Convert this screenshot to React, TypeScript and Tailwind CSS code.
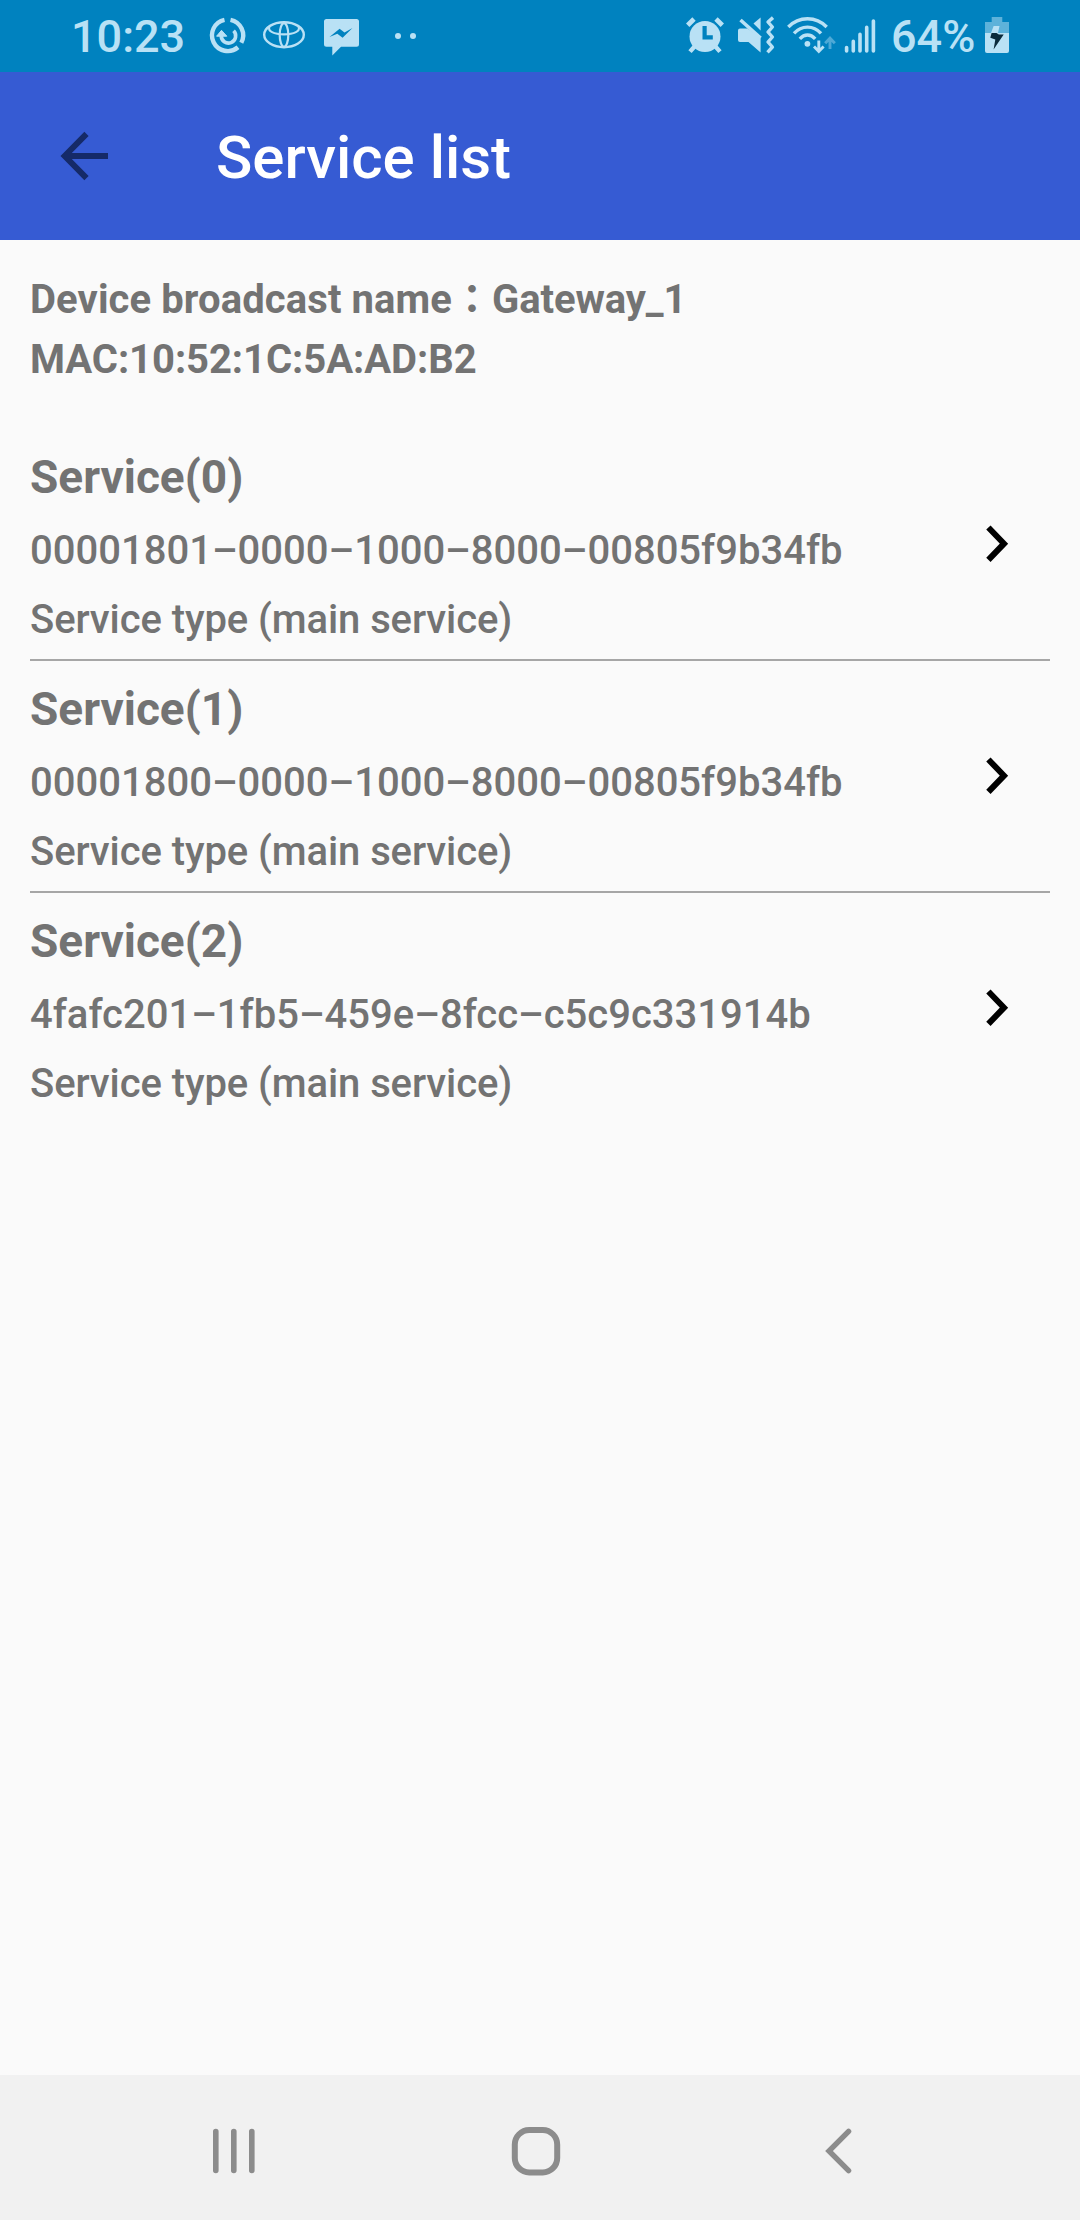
const services = [
  { name: "Service(0)", uuid: "00001801–0000–1000–8000–00805f9b34fb" },
  { name: "Service(1)", uuid: "00001800–0000–1000–8000–00805f9b34fb" },
  { name: "Service(2)", uuid: "4fafc201–1fb5–459e–8fcc–c5c9c331914b" },
];

function SyncIcon() {
  return (
    <svg className="ml-[20px] h-[72px] w-[44px]" viewBox="206 0 44 72" fill="none" stroke="currentColor">
      <path d="M230.5 19.8 A15.8 15.8 0 0 1 241.3 42.7" strokeWidth="4.4" />
      <path d="M238 47.3 A15.8 15.8 0 1 1 224.5 19.8" strokeWidth="4.4" />
      <path d="M233.6 30.8 A7.2 7.2 0 1 1 221.3 35.5" strokeWidth="3.6" />
      <path d="M216.6 36.2 L221.5 30.3 L226.8 36.2 Z" fill="currentColor" strokeWidth="1" />
    </svg>
  );
}

function ToyotaIcon() {
  return (
    <svg className="ml-[10px] h-[72px] w-[48px]" viewBox="260 0 48 72" fill="none" stroke="currentColor" strokeWidth="2.4">
      <ellipse cx="284" cy="34.7" rx="19.8" ry="12.5" />
      <ellipse cx="284" cy="35" rx="4.3" ry="11.8" strokeWidth="2.2" />
      <path d="M269.5 26.8 C267 31 274 34.3 284 34.3 S301 31 298.5 26.8" strokeWidth="2.2" />
    </svg>
  );
}

function MessengerIcon() {
  return (
    <svg className="ml-[9px] h-[72px] w-[48px]" viewBox="317 0 48 72">
      <path
        d="M326.5 19 H356.5 Q359 19 359 21.5 V44.2 Q359 46.7 356.5 46.7 H341 L332.3 55.5 V46.7 H326.5 Q324 46.7 324 44.2 V21.5 Q324 19 326.5 19 Z"
        fill="currentColor"
      />
      <path d="M329.5 37 L339.6 28.8 L344.5 32.6 L352.5 28 L342.6 37.8 L337.3 33.8 Z" fill="#0082bf" />
    </svg>
  );
}

function AlarmIcon() {
  return (
    <svg className="h-[72px] w-[44px]" viewBox="683 0 44 72" stroke="currentColor">
      <circle cx="705" cy="36.5" r="15.5" fill="currentColor" stroke="none" />
      <path d="M687.7 25.2 L694 19 M722.3 25.2 L716 19" strokeWidth="4.8" />
      <path d="M695 46 L690 51.6 M715 46 L720 51.6" strokeWidth="4.4" />
      <path d="M704.6 26 V37.3 H712.8" fill="none" stroke="#0082bf" strokeWidth="4.2" />
    </svg>
  );
}

function MuteVibrateIcon() {
  return (
    <svg className="ml-[6px] h-[72px] w-[44px]" viewBox="733 0 44 72" fill="currentColor">
      <path d="M738 30.6 Q738 28.6 740 28.6 H747.5 L760.6 38 V52.6 L748.5 42 H740 Q738 42 738 40 Z" />
      <path d="M740.5 20 L760.6 38" fill="none" stroke="currentColor" strokeWidth="3.6" />
      <path d="M753.5 23.6 L760.6 17.5 V30.5 Z" />
      <path
        d="M773 17.6 L768 22 L772.4 27 L768 32 L772.4 37 L768 42 L772.4 47 L767.5 52.4"
        fill="none"
        stroke="currentColor"
        strokeWidth="3.4"
        strokeLinejoin="round"
      />
    </svg>
  );
}

function WifiIcon() {
  return (
    <svg className="ml-[8px] h-[72px] w-[52px]" viewBox="785 0 52 72" fill="none" stroke="currentColor" strokeWidth="3.4">
      <path d="M788.3 27 C799 16 816 16 826.7 27" />
      <path d="M794 33.4 C801.5 25 813.5 25 821 33.4" />
      <path d="M799.8 38.8 C804.5 33.8 810.5 33.8 815.2 38.8" />
      <circle cx="807.4" cy="43.8" r="2.9" fill="currentColor" stroke="none" />
      <path d="M818.8 40.6 V51 M814 46.4 L818.8 51.4 L823.6 46.4" strokeWidth="2.9" />
      <path d="M830 49 V38.6 M825.2 43.2 L830 38.2 L834.8 43.2" strokeWidth="2.9" opacity="0.42" />
    </svg>
  );
}

function SignalIcon() {
  return (
    <svg
      className="ml-[6px] h-[72px] w-[34px]"
      viewBox="843 0 34 72"
      stroke="currentColor"
      strokeWidth="3.6"
      strokeLinecap="round"
    >
      <path d="M846.6 47.6 V51 M853.3 41.4 V51 M860 34.4 V51 M866.7 27.4 V51 M873.4 21 V51" />
    </svg>
  );
}

function BatteryIcon() {
  return (
    <svg className="ml-[8px] h-[72px] w-[26px]" viewBox="984 0 26 72" fill="currentColor">
      <path d="M991.7 17 H1002.3 V22 H1009 V33 H985 V22 H991.7 Z" opacity="0.5" />
      <path d="M985 33 H1009 V51 Q1009 53 1007 53 H987 Q985 53 985 51 Z" />
      <path d="M993.6 26 L999.5 26 L998 33 H991 Z" />
      <path d="M991.6 33 H996.5 L998.8 34.6 H1003.7 L993.6 49.5 L995.3 39.6 L990.3 37.8 Z" fill="#0b2b3c" />
    </svg>
  );
}

function StatusBar() {
  return (
    <div className="flex h-[72px] items-center justify-between bg-[#0082bf] pr-[70px] pl-[71px] text-[#b9e1f5]">
      <div className="flex items-center">
        <span className="w-[115px] pt-px text-[45px] leading-[70px] font-medium">10:23</span>
        <SyncIcon />
        <ToyotaIcon />
        <MessengerIcon />
        <div className="ml-[30px] flex gap-[9px]">
          <span className="size-1.5 rounded-full bg-current" />
          <span className="size-1.5 rounded-full bg-current" />
        </div>
      </div>
      <div className="flex items-center">
        <AlarmIcon />
        <MuteVibrateIcon />
        <WifiIcon />
        <SignalIcon />
        <span className="ml-[14px] w-[85px] pt-px text-[45px] leading-[70px] font-medium">64%</span>
        <BatteryIcon />
      </div>
    </div>
  );
}

function Header() {
  return (
    <header className="flex h-[168px] items-center bg-[#365bd3]">
      <svg className="ml-[56px] size-[56px]" viewBox="56 128 56 56" fill="none" stroke="#152a68" strokeWidth="6">
        <path d="M86.5 133.8 L64.7 156 L86.5 178.2" />
        <path d="M64.5 156 H108" />
      </svg>
      <h1 className="ml-[104px] pt-[3px] text-[60px] font-medium text-white">Service list</h1>
    </header>
  );
}

function ServiceRow({ name, uuid, divider }: { name: string; uuid: string; divider: boolean }) {
  return (
    <li
      className={`flex items-center justify-between border-b-2 pt-[21px] pb-[9px] ${
        divider ? "border-[#a6a6a6]" : "border-transparent"
      }`}
    >
      <div>
        <h2 className="text-[46px] leading-[54px] font-bold">{name}</h2>
        <p className="mt-[17px] text-[40px] leading-[60px] font-medium">{uuid}</p>
        <p className="mt-[9px] text-[40px] leading-[60px] font-medium tracking-[-0.09px]">
          Service type (main service)
        </p>
      </div>
      <svg className="mr-[33px] -mt-[12px] size-[40px]" viewBox="977 524 40 40" fill="none" stroke="#000" strokeWidth="6">
        <path d="M988.4 527.5 L1004 543.7 L988.4 559.9" />
      </svg>
    </li>
  );
}

function NavigationBar() {
  return (
    <nav className="flex h-[145px] items-center justify-between bg-[#f1f1f1] px-[204px] pt-[7px] text-[#8c8c8c]">
      <svg className="h-[60px] w-[60px]" viewBox="204 2121 60 60" stroke="currentColor" strokeWidth="5.6" strokeLinecap="round">
        <path d="M215.8 2131.5 V2170.5 M233.8 2131.5 V2170.5 M251.8 2131.5 V2170.5" />
      </svg>
      <svg className="h-[60px] w-[60px]" viewBox="510 2121 60 60" fill="none" stroke="currentColor" strokeWidth="6">
        <rect x="514.8" y="2130" width="42.4" height="42.4" rx="14.5" />
      </svg>
      <svg
        className="h-[60px] w-[60px]"
        viewBox="816 2121 60 60"
        fill="none"
        stroke="currentColor"
        strokeWidth="5.4"
        strokeLinecap="round"
      >
        <path d="M848.6 2131.3 L829 2151 L848.6 2170.7" />
      </svg>
    </nav>
  );
}

export default function App() {
  return (
    <div className="flex h-[2220px] w-[1080px] flex-col bg-[#fafafa] font-['Roboto','Noto_Sans_CJK_JP',sans-serif] whitespace-nowrap">
      <StatusBar />
      <Header />
      <main className="flex-1 px-[30px] pt-[30px] text-[#737373]">
        <div className="mb-[39px] text-[40px] leading-[60px] font-bold">
          <p>
            <span className="tracking-[0.1px]">Device broadcast name</span>：
            <span className="tracking-[-0.1px]">Gateway_1</span>
          </p>
          <p className="tracking-[-0.06px]">MAC:10:52:1C:5A:AD:B2</p>
        </div>
        <ul>
          {services.map((service, i) => (
            <ServiceRow key={service.name} {...service} divider={i < services.length - 1} />
          ))}
        </ul>
      </main>
      <NavigationBar />
    </div>
  );
}
